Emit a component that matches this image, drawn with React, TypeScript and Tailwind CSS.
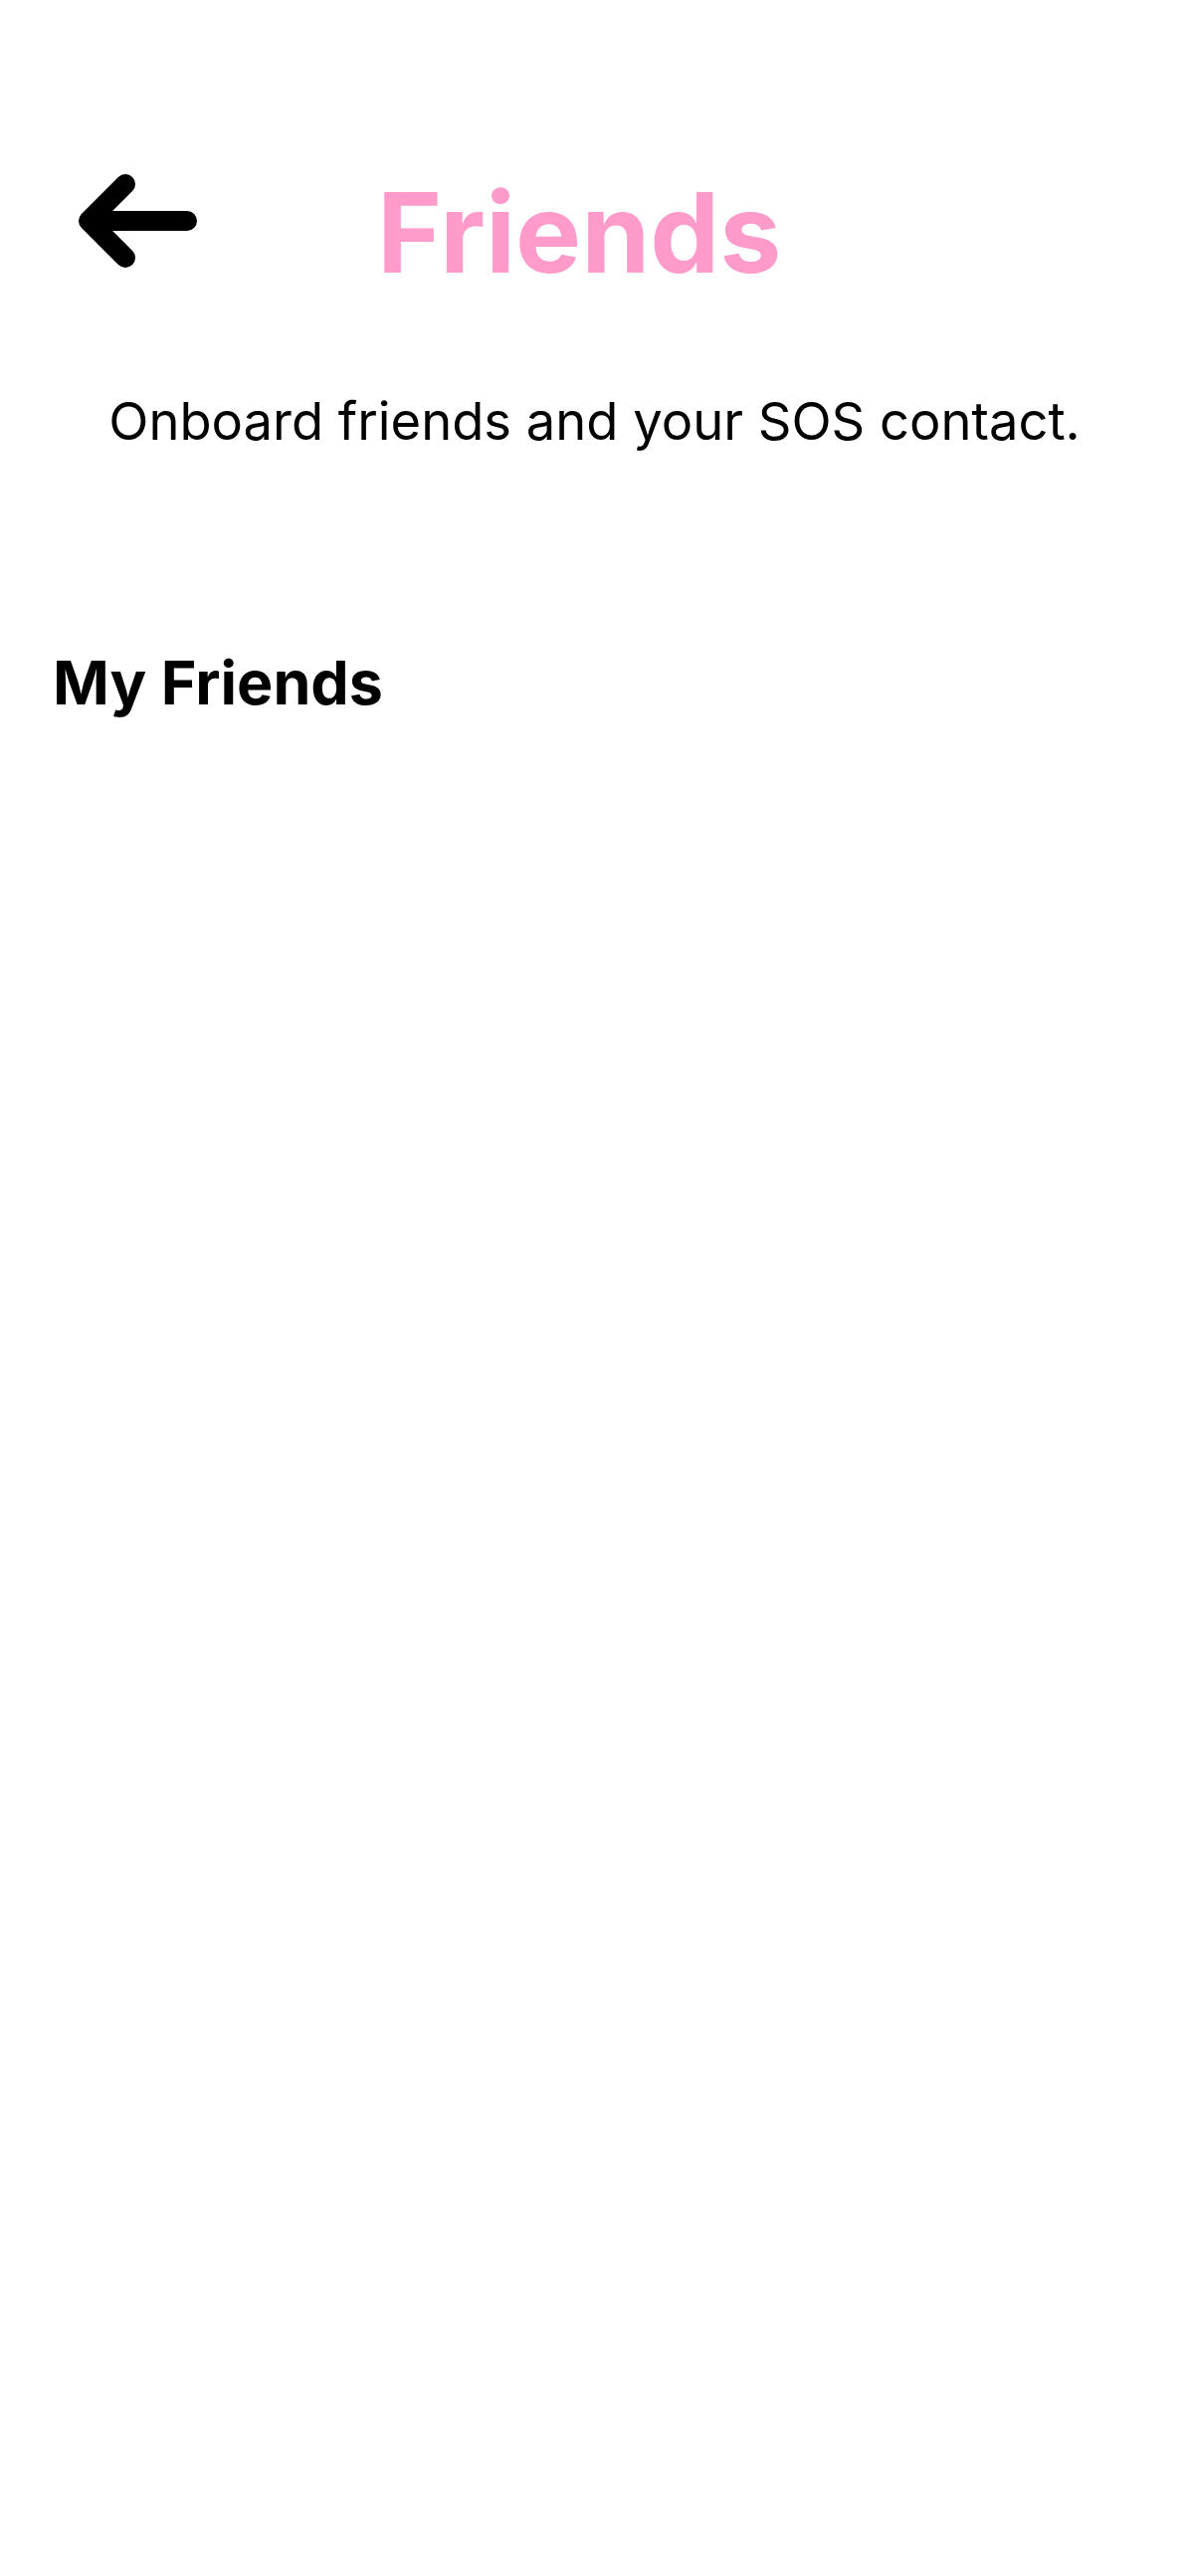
function BackArrow() {
  return (
    <svg width="120" height="94" viewBox="0 0 120 94" fill="none" aria-hidden="true">
      <path
        d="M47 10 L10 47 L47 84 M10 47 H109"
        stroke="#000"
        strokeWidth="20"
        strokeLinecap="round"
        strokeLinejoin="round"
      />
    </svg>
  );
}

export default function App() {
  return (
    <div className="min-h-[2589px] w-full bg-white font-['Inter','Noto_Sans',sans-serif] text-black">
      {/* HEADER */}
      <div className="flex items-start pt-[175px] pl-[79px]">
        <button type="button" className="shrink-0">
          <BackArrow />
        </button>
        <h1 className="ml-[180px] mt-[3px] text-[111px] font-bold leading-none text-[#ff9bcb]">
          Friends
        </h1>
      </div>

      <p className="mt-[108px] text-center text-[52.5px] leading-none font-normal">
        Onboard friends and your SOS contact.
      </p>

      <h2 className="mt-[206px] pl-[53px] text-[61px] font-bold leading-none">
        My Friends
      </h2>
    </div>
  );
}
